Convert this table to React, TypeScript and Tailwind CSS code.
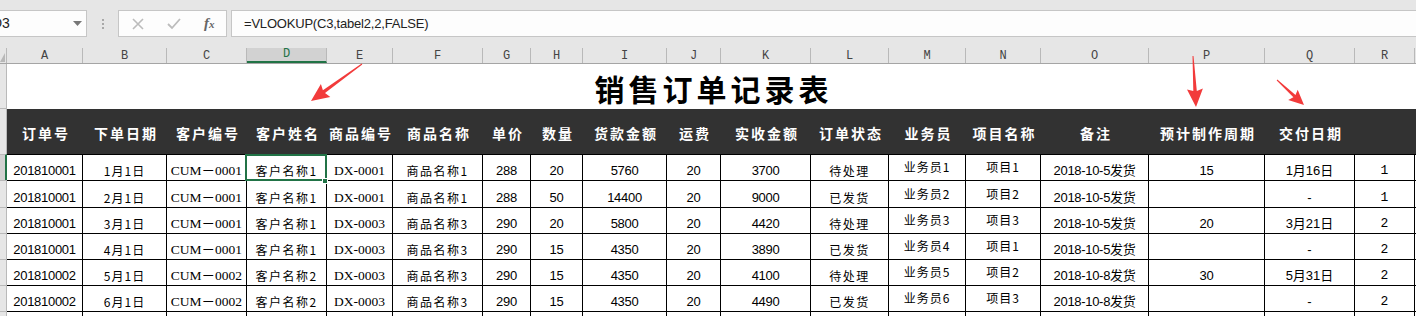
import React from "react";

const W = [
  "w-[76px]", "w-[84px]", "w-[80px]", "w-[80px]", "w-[66px]", "w-[90px]",
  "w-[48px]", "w-[52px]", "w-[84px]", "w-[54px]", "w-[90px]", "w-[78px]",
  "w-[77px]", "w-[75px]", "w-[108px]", "w-[116px]", "w-[90px]", "w-[60px]",
];
const LETTERS = "ABCDEFGHIJKLMNOPQR".split("");
const HEAD = [
  "订单号", "下单日期", "客户编号", "客户姓名", "商品编号", "商品名称", "单价", "数量",
  "货款金额", "运费", "实收金额", "订单状态", "业务员", "项目名称", "备注", "预计制作周期", "交付日期", "",
];

type Kind = "num" | "cjk" | "date" | "serif" | "high" | "q" | "mono";
const KIND: Kind[] = [
  "num", "date", "serif", "cjk", "serif", "cjk", "num", "num", "num", "num", "num",
  "cjk", "high", "high", "num", "num", "q", "mono",
];
const FONT: Record<Kind, string> = {
  num: "font-['Liberation_Sans','Noto_Sans_CJK_SC',sans-serif] text-[13px] tracking-[-0.3px] pb-[1px]",
  cjk: "font-['Noto_Sans_CJK_SC',sans-serif] text-[12px] tracking-[1.5px] pb-[1px]",
  date: "font-['Noto_Sans_CJK_SC',sans-serif] text-[12px] tracking-[1px] pb-[1px]",
  serif: "font-['Liberation_Serif','Noto_Sans_CJK_SC',serif] text-[13.5px] pb-[1px]",
  high: "font-['Noto_Sans_CJK_SC',sans-serif] text-[12px] tracking-[1px] pb-[5px]",
  q: "font-['Liberation_Sans','Noto_Sans_CJK_SC',sans-serif] text-[13px] pb-[1px]",
  mono: "font-['Liberation_Mono',monospace] text-[13px] pb-[1px]",
};

const ROWS = [
  ["201810001", "1月1日", "CUM－0001", "客户名称1", "DX-0001", "商品名称1", "288", "20", "5760", "20", "3700", "待处理", "业务员1", "项目1", "2018-10-5发货", "15", "1月16日", "1"],
  ["201810001", "2月1日", "CUM－0001", "客户名称1", "DX-0001", "商品名称1", "288", "50", "14400", "20", "9000", "已发货", "业务员2", "项目2", "2018-10-5发货", "", "-", "1"],
  ["201810001", "3月1日", "CUM－0001", "客户名称1", "DX-0003", "商品名称3", "290", "20", "5800", "20", "4420", "待处理", "业务员3", "项目3", "2018-10-5发货", "20", "3月21日", "2"],
  ["201810001", "4月1日", "CUM－0001", "客户名称1", "DX-0003", "商品名称3", "290", "15", "4350", "20", "3890", "已发货", "业务员4", "项目1", "2018-10-5发货", "", "-", "2"],
  ["201810002", "5月1日", "CUM－0002", "客户名称2", "DX-0003", "商品名称3", "290", "15", "4350", "20", "4100", "待处理", "业务员5", "项目2", "2018-10-8发货", "30", "5月31日", "2"],
  ["201810002", "6月1日", "CUM－0002", "客户名称2", "DX-0003", "商品名称3", "290", "15", "4350", "20", "4490", "已发货", "业务员6", "项目3", "2018-10-8发货", "", "-", "2"],
];
const ROW_H = ["h-[26px]", "h-[27px]", "h-[26px]", "h-[26px]", "h-[26px]", "h-[26px]"];

function arrowPoints(x1: number, y1: number, x2: number, y2: number, head: number, half: number, tailW: number, neckW: number) {
  const dx = x2 - x1;
  const dy = y2 - y1;
  const L = Math.hypot(dx, dy);
  const ux = dx / L;
  const uy = dy / L;
  const px = -uy;
  const py = ux;
  const bx = x2 - ux * head;
  const by = y2 - uy * head;
  const nx = bx + ux * 2;
  const ny = by + uy * 2;
  const pts = [
    [x1 + (px * tailW) / 2, y1 + (py * tailW) / 2],
    [nx + (px * neckW) / 2, ny + (py * neckW) / 2],
    [bx + px * half, by + py * half],
    [x2, y2],
    [bx - px * half, by - py * half],
    [nx - (px * neckW) / 2, ny - (py * neckW) / 2],
    [x1 - (px * tailW) / 2, y1 - (py * tailW) / 2],
  ];
  return pts.map((p) => `${p[0].toFixed(1)},${p[1].toFixed(1)}`).join(" ");
}

export default function App() {
  return (
    <div className="relative w-[1416px] h-[316px] overflow-hidden bg-[#e6e6e6] font-['Liberation_Sans','Noto_Sans_CJK_SC',sans-serif]">
      {/* formula bar */}
      <div className="flex h-[37px] pt-[10px]">
        <div className="relative flex h-[27px] w-[87px] items-center overflow-hidden border border-l-0 border-[#c6c6c6] bg-[#fdfdfd]">
          <span className="ml-[-8px] text-[14px] text-[#222]">D3</span>
          <svg className="absolute left-[73px] top-[10px]" width="9" height="5" viewBox="0 0 9 5">
            <polygon points="0,0 9,0 4.5,5" fill="#777" />
          </svg>
        </div>
        <div className="flex w-[31px] flex-col items-center justify-center gap-[2px]">
          <div className="h-[2px] w-[2px] bg-[#a8a8a8]" />
          <div className="h-[2px] w-[2px] bg-[#a8a8a8]" />
          <div className="h-[2px] w-[2px] bg-[#a8a8a8]" />
        </div>
        <div className="flex h-[27px] w-[109px] items-center border border-[#c6c6c6] bg-[#fdfdfd]">
          <svg className="ml-[13px]" width="12" height="12" viewBox="0 0 12 12">
            <path d="M1 1 L11 11 M11 1 L1 11" stroke="#bcbcbc" strokeWidth="1.6" />
          </svg>
          <svg className="ml-[23px]" width="14" height="12" viewBox="0 0 14 12">
            <path d="M1 6 L5 10 L13 1" stroke="#bcbcbc" strokeWidth="1.8" fill="none" />
          </svg>
          <span className="ml-[23px] font-['Liberation_Serif',serif] text-[15px] font-bold italic leading-none text-[#666]">
            f<span className="text-[11px]">x</span>
          </span>
        </div>
        <div className="ml-[4px] flex h-[27px] flex-1 items-center border border-r-0 border-[#c6c6c6] bg-[#fdfdfd] pl-[12px]">
          <span className="text-[13px] tracking-[-0.2px] text-[#222]">=VLOOKUP(C3,tabel2,2,FALSE)</span>
        </div>
      </div>
      <div className="h-[11px]" />

      {/* column header */}
      <div className="flex h-[16px] border-b border-[#a5a5a5] font-['Liberation_Mono',monospace] text-[12px] text-[#444]">
        <div className="relative w-[7px] border-r border-[#b9b9b9]">
          <svg className="absolute left-0 top-[5px]" width="5" height="9" viewBox="0 0 5 9">
            <polygon points="5,0 5,9 0,9" fill="#b8b8b8" />
          </svg>
        </div>
        {LETTERS.map((l, i) => (
          <div
            key={l}
            className={`${W[i]} flex items-end justify-center border-r border-[#b9b9b9] leading-[14px] ${
              l === "D" ? "border-b-2 border-b-[#217346] bg-[#d2d2d2] text-[#217346]" : ""
            }`}
          >
            {l}
          </div>
        ))}
        <div className="flex-1" />
      </div>

      {/* title row */}
      <div className="flex h-[45px] bg-white">
        <div className="w-[7px] border-b border-r border-[#b9b9b9] bg-[#e6e6e6]" />
        <div className="flex flex-1 items-end justify-center pb-[2px] pl-[4px]">
          <span className="font-['Noto_Sans_CJK_SC',sans-serif] text-[30px] font-bold leading-[38px] tracking-[4px] text-black">
            销售订单记录表
          </span>
        </div>
      </div>

      {/* header row */}
      <div className="flex h-[45px] bg-[#323232]">
        <div className="w-[7px] border-r border-[#b9b9b9] bg-[#e6e6e6]" />
        {HEAD.map((h, i) => (
          <div
            key={i}
            className={`${W[i]} flex items-center justify-center whitespace-nowrap pt-[3px] pl-[2px] font-['Noto_Sans_CJK_SC',sans-serif] text-[14px] font-bold tracking-[2px] text-white`}
          >
            {h}
          </div>
        ))}
        <div className="flex-1" />
      </div>

      {/* data rows */}
      {ROWS.map((row, r) => (
        <div key={r} className={`flex ${ROW_H[r]} bg-white`}>
          <div
            className={`w-[7px] border-t border-[#b9b9b9] ${
              r === 0 ? "border-r-2 border-r-[#217346] bg-[#d2d2d2]" : "border-r bg-[#e6e6e6]"
            }`}
          />
          {row.map((c, i) => (
            <div
              key={i}
              className={`${W[i]} relative flex items-end justify-center whitespace-nowrap border-r border-t border-black leading-[16px] text-black ${FONT[KIND[i]]}`}
            >
              {c}
              {r === 0 && i === 3 && (
                <>
                  <div className="absolute left-[-2px] top-[-1px] z-10 h-[27px] w-[82px] border-2 border-[#217346]" />
                  <div className="absolute left-[75px] top-[23px] z-20 h-[6px] w-[6px] border border-white bg-[#217346]" />
                </>
              )}
            </div>
          ))}
          <div className="flex-1 border-t border-black" />
        </div>
      ))}
      <div className="flex h-[26px] bg-white">
        <div className="w-[7px] border-r border-t border-[#b9b9b9] bg-[#e6e6e6]" />
        {W.map((w, i) => (
          <div key={i} className={`${w} border-r border-t border-black`} />
        ))}
        <div className="flex-1 border-t border-black" />
      </div>

      {/* annotation arrows */}
      <svg className="pointer-events-none absolute left-0 top-0" width="1416" height="316" viewBox="0 0 1416 316">
        <polygon points={arrowPoints(362, 64, 311, 101, 18, 8, 1, 3.5)} fill="#f23b3b" />
        <polygon points={arrowPoints(1193, 56, 1196, 107, 18, 8, 1, 3.5)} fill="#f23b3b" />
        <polygon points={arrowPoints(1277, 80, 1304, 105, 15, 7, 1, 3)} fill="#f23b3b" />
      </svg>
    </div>
  );
}
